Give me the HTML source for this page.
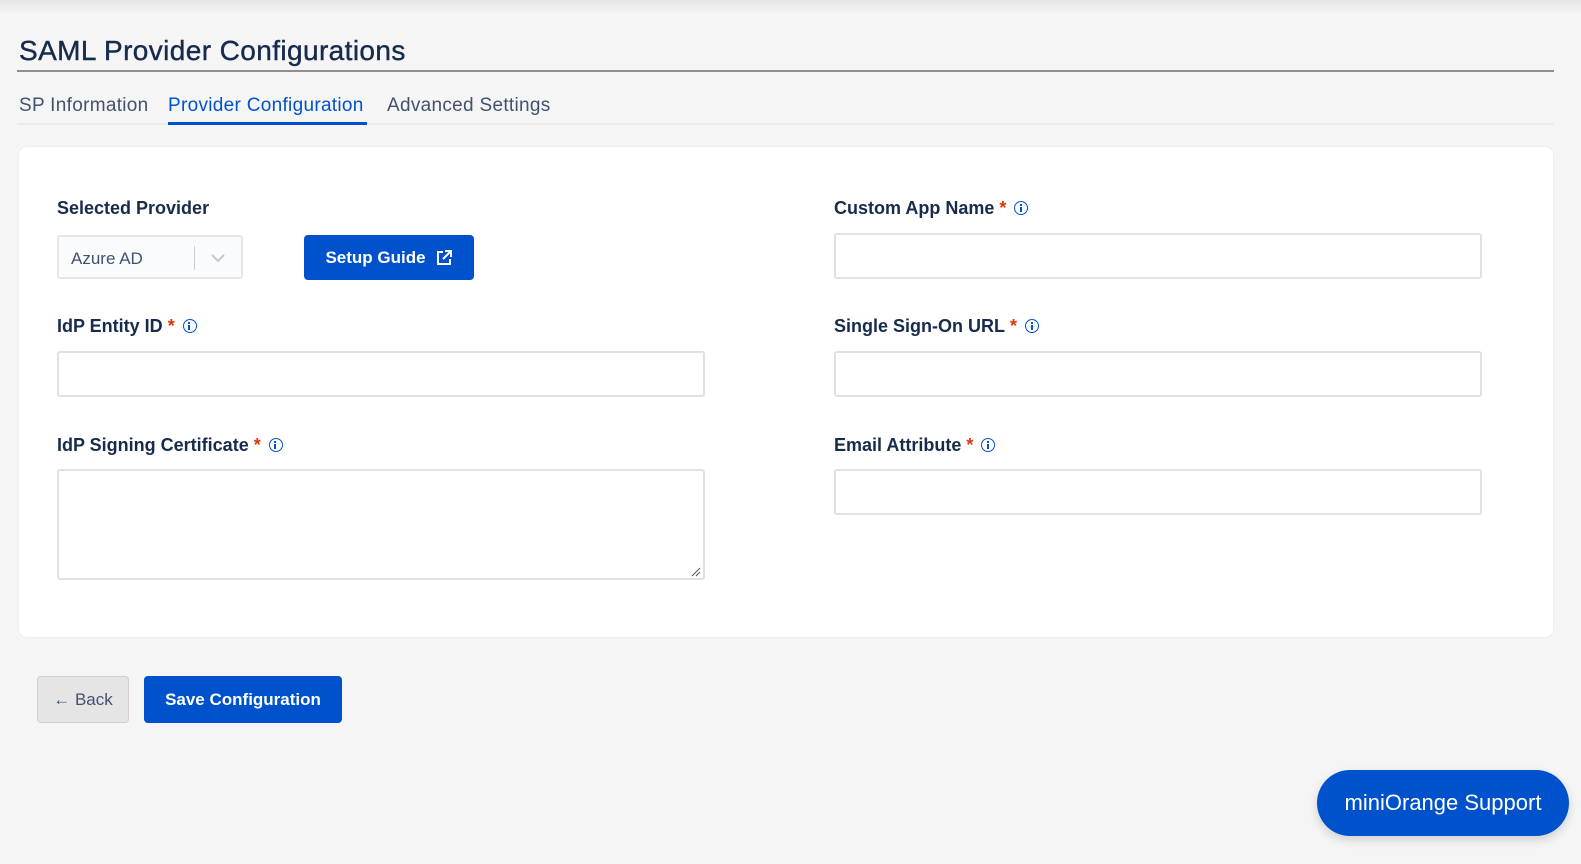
<!DOCTYPE html>
<html><head><meta charset="utf-8"><style>
*{box-sizing:border-box;margin:0;padding:0}
body{width:1581px;height:864px;background:#f5f5f5;font-family:"Liberation Sans",sans-serif;position:relative;overflow:hidden;color:#172b4d}
.topsh{position:absolute;left:0;top:0;width:1581px;height:14px;background:linear-gradient(#e6e6e6,#f5f5f5)}
h1{position:absolute;left:19px;top:35px;font-size:28px;font-weight:normal;color:#172b4d;letter-spacing:0.4px;-webkit-text-stroke:0.4px #172b4d}
.hr{position:absolute;left:17px;top:70px;width:1537px;height:2px;background:#8f8f8f}
.tabs{position:absolute;left:19px;top:95px;font-size:19px;color:#42526e;letter-spacing:0.3px}
.tabs span{position:absolute;white-space:nowrap}
.tabline{position:absolute;left:17px;top:123px;width:1537px;height:2px;background:#ebebeb}
.act{position:absolute;left:168px;top:122px;width:199px;height:3px;background:#0052cc}
.card{position:absolute;left:19px;top:147px;width:1534px;height:490px;background:#fff;border-radius:8px;box-shadow:0 0 2px rgba(0,0,0,.08)}
.lbl{position:absolute;font-size:18px;font-weight:bold;color:#172b4d;white-space:nowrap}
.lbl b{color:#de350b;margin-left:5px}
.info{display:inline-block;width:14px;height:14px;border:1.5px solid #0052cc;border-radius:50%;margin-left:8px;position:relative;top:1px}
.info:before{content:"";position:absolute;left:4.5px;top:2px;width:2px;height:2px;background:#0052cc}
.info:after{content:"";position:absolute;left:4.5px;top:5px;width:2px;height:5px;background:#0052cc}
.inp{position:absolute;background:#fff;border:2px solid #dfe1e6;border-radius:3px}
.btn{position:absolute;background:#0052cc;color:#fff;font-weight:bold;border-radius:4px;display:flex;align-items:center;justify-content:center;font-size:17px}
</style></head><body>
<div class="topsh"></div>
<h1>SAML Provider Configurations</h1>
<div class="hr"></div>
<div class="tabs"><span style="left:0">SP Information</span><span style="left:149px;color:#0052cc">Provider Configuration</span><span style="left:368px">Advanced Settings</span></div>
<div class="tabline"></div><div class="act"></div>
<div class="card"></div>
<div class="lbl" style="left:57px;top:198px">Selected Provider</div>
<div class="inp" style="left:57px;top:235px;width:186px;height:44px;background:#fafbfc;border-color:#e6e6e6"></div>
<div style="position:absolute;left:71px;top:249px;font-size:17px;color:#42526e">Azure AD</div>
<div style="position:absolute;left:194px;top:246px;width:1px;height:24px;background:#ccc"></div>
<svg style="position:absolute;left:210px;top:252px" width="16" height="12"><path d="M2 3l6 6 6-6" stroke="#c8c8c8" stroke-width="2" fill="none"/></svg>
<div class="btn" style="left:304px;top:235px;width:170px;height:45px">Setup Guide <svg style="margin-left:9px" width="18" height="18" viewBox="0 0 18 18"><path d="M8 3H3v12h12v-5M10 2h6v6M16 2l-8 8" stroke="#fff" stroke-width="2" fill="none"/></svg></div>
<div class="lbl" style="left:834px;top:198px">Custom App Name<b>*</b><span class="info"></span></div>
<div class="inp" style="left:834px;top:233px;width:648px;height:46px"></div>
<div class="lbl" style="left:57px;top:316px">IdP Entity ID<b>*</b><span class="info"></span></div>
<div class="inp" style="left:57px;top:351px;width:648px;height:46px"></div>
<div class="lbl" style="left:834px;top:316px">Single Sign-On URL<b>*</b><span class="info"></span></div>
<div class="inp" style="left:834px;top:351px;width:648px;height:46px"></div>
<div class="lbl" style="left:57px;top:435px">IdP Signing Certificate<b>*</b><span class="info"></span></div>
<div class="inp" style="left:57px;top:469px;width:648px;height:111px"></div>
<svg style="position:absolute;left:691px;top:567px" width="10" height="10"><path d="M1 9L9 1M5 9L9 5" stroke="#555" stroke-width="1"/></svg>
<div class="lbl" style="left:834px;top:435px">Email Attribute<b>*</b><span class="info"></span></div>
<div class="inp" style="left:834px;top:469px;width:648px;height:46px"></div>
<div class="btn" style="left:37px;top:676px;width:92px;height:47px;background:#e5e5e5;border:1px solid #cfcfcf;color:#42526e;font-weight:normal">← Back</div>
<div class="btn" style="left:144px;top:676px;width:198px;height:47px">Save Configuration</div>
<div class="btn" style="left:1317px;top:770px;width:252px;height:66px;border-radius:33px;font-weight:normal;font-size:22px;box-shadow:0 4px 10px rgba(0,0,0,.15)">miniOrange Support</div>
</body></html>
